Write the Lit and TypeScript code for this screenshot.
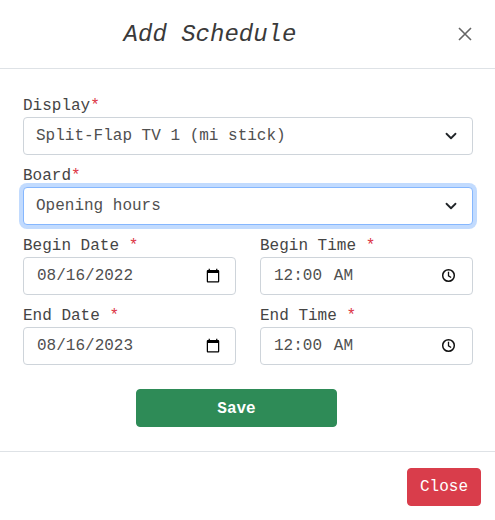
import { LitElement, html, css, unsafeCSS } from 'lit';
import { customElement } from 'lit/decorators.js';

const chevron =
  "url(\"data:image/svg+xml,%3csvg xmlns='http://www.w3.org/2000/svg' viewBox='0 0 16 16'%3e%3cpath fill='none' stroke='%23212529' stroke-linecap='round' stroke-linejoin='round' stroke-width='2.4' d='m2 5 6 6 6-6'/%3e%3c/svg%3e\")";
const clock =
  "url(\"data:image/svg+xml,%3csvg xmlns='http://www.w3.org/2000/svg' viewBox='0 0 16 16'%3e%3ccircle cx='8' cy='8' r='6.2' fill='none' stroke='%23111' stroke-width='1.6'/%3e%3cpath fill='none' stroke='%23111' stroke-width='1.4' d='M8 4v4.4l2.8 1.7'/%3e%3c/svg%3e\")";

@customElement('app-root')
export class AppRoot extends LitElement {
  static styles = css`
    :host {
      display: block;
      width: 495px;
      height: 520px;
      background: #fff;
      color: #454545;
      font-family: 'Liberation Mono', 'Courier New', monospace;
      font-size: 16px;
      line-height: 24px;
    }

    * {
      box-sizing: border-box;
    }

    .header {
      display: flex;
      align-items: center;
      height: 69px;
      padding: 0 22px 0 16px;
      border-bottom: 1px solid #dee2e6;
    }

    .title {
      width: 388px;
      margin: 0;
      padding-top: 2px;
      color: #3a3a3a;
      font-size: 24px;
      font-weight: 400;
      font-style: italic;
      line-height: 36px;
      text-align: center;
    }

    .close-x {
      display: block;
      width: 16px;
      height: 16px;
      margin-left: auto;
      padding: 0;
      border: 0;
      background: none;
      opacity: 0.6;
    }

    .close-x svg {
      display: block;
    }

    form {
      display: flex;
      flex-direction: column;
      gap: 7px;
      padding: 23px 22px 24px 23px;
      border-bottom: 1px solid #dee2e6;
    }

    .cols {
      display: grid;
      grid-template-columns: 213px 213px;
      column-gap: 24px;
    }

    label {
      display: block;
      height: 25px;
      padding-top: 2px;
    }

    .req {
      color: #dc3545;
    }

    .control {
      display: block;
      width: 100%;
      height: 38px;
      padding: 6px 12px;
      border: 1px solid #ced4da;
      border-radius: 4px;
      background-color: #fff;
      color: #505050;
      font: inherit;
      outline: none;
    }

    input.control {
      padding-left: 13px;
    }

    input::-webkit-datetime-edit-month-field,
    input::-webkit-datetime-edit-day-field,
    input::-webkit-datetime-edit-year-field,
    input::-webkit-datetime-edit-hour-field,
    input::-webkit-datetime-edit-minute-field,
    input::-webkit-datetime-edit-ampm-field {
      padding: 0;
    }

    input::-webkit-datetime-edit-ampm-field {
      margin-left: 7px;
    }

    input[type='time']::-webkit-calendar-picker-indicator {
      background-image: ${unsafeCSS(clock)};
      background-size: 15px 15px;
      background-position: center;
      background-repeat: no-repeat;
    }

    select.control {
      appearance: none;
      padding-right: 36px;
      background-image: ${unsafeCSS(chevron)};
      background-repeat: no-repeat;
      background-position: right 15px center;
      background-size: 12px 12px;
    }

    .focus {
      border-color: #86b7fe;
      box-shadow: 0 0 0 4px rgba(13, 110, 253, 0.25);
    }

    .save {
      align-self: flex-start;
      width: 201px;
      height: 38px;
      margin: 17px 0 0 113px;
      padding: 2px 0 0;
      border: 1px solid #2e8b57;
      border-radius: 4px;
      background: #2e8b57;
      color: #fff;
      font: inherit;
      font-weight: 700;
    }

    .footer {
      display: flex;
      justify-content: flex-end;
      padding: 16px 14px 14px;
    }

    .close-btn {
      width: 74px;
      height: 38px;
      border: 1px solid #d93d4b;
      border-radius: 4px;
      background: #d93d4b;
      color: #fff;
      font: inherit;
    }
  `;

  private dateField(name: string, value: string) {
    return html`<div>
      <label>${name} <span class="req">*</span></label>
      <input class="control" type="date" .value=${value} />
    </div>`;
  }

  private timeField(name: string, value: string) {
    return html`<div>
      <label>${name} <span class="req">*</span></label>
      <input class="control" type="time" .value=${value} />
    </div>`;
  }

  render() {
    return html`
      <div class="header">
        <h5 class="title">Add Schedule</h5>
        <button class="close-x" aria-label="Close">
          <svg width="16" height="16" viewBox="0 0 16 16">
            <path d="M2 2l12 12M14 2L2 14" stroke="#000" stroke-width="1.6" fill="none" />
          </svg>
        </button>
      </div>
      <form>
        <div>
          <label>Display<span class="req">*</span></label>
          <select class="control">
            <option>Split-Flap TV 1 (mi stick)</option>
          </select>
        </div>
        <div>
          <label>Board<span class="req">*</span></label>
          <select class="control focus">
            <option>Opening hours</option>
          </select>
        </div>
        <div class="cols">
          ${this.dateField('Begin Date', '2022-08-16')}
          ${this.timeField('Begin Time', '00:00')}
        </div>
        <div class="cols">
          ${this.dateField('End Date', '2023-08-16')}
          ${this.timeField('End Time', '00:00')}
        </div>
        <button class="save" type="button">Save</button>
      </form>
      <div class="footer">
        <button class="close-btn" type="button">Close</button>
      </div>
    `;
  }
}
